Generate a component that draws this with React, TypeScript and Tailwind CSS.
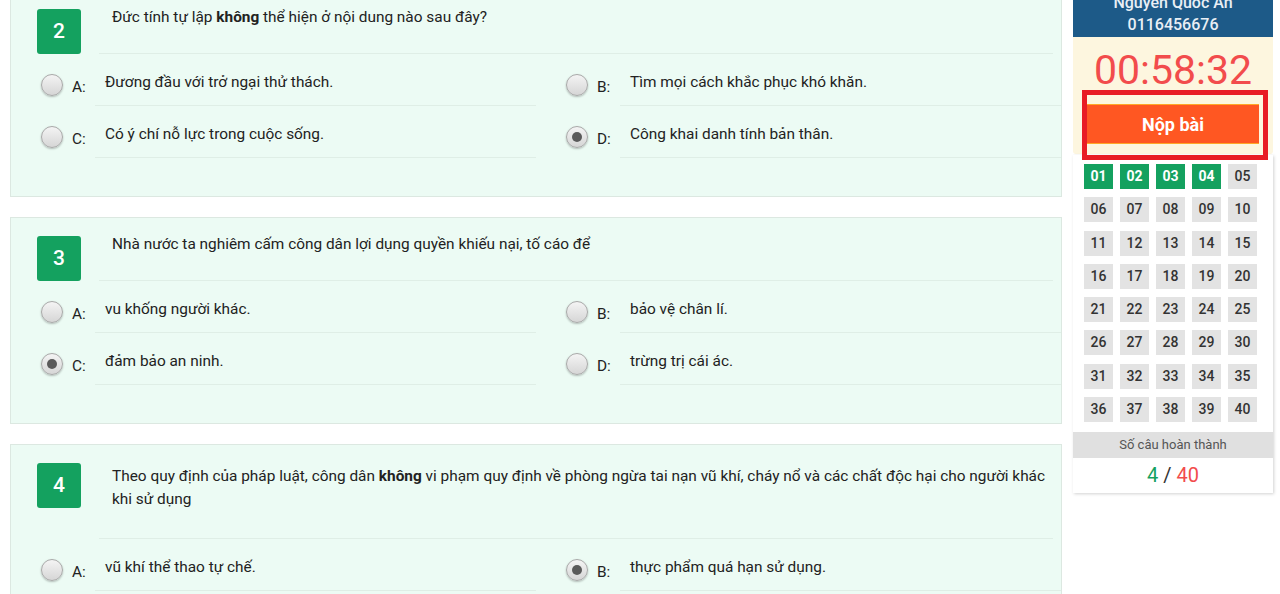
import type { ReactNode } from 'react'

interface Question {
  num: number
  text: ReactNode
  options: string[]
  checked: number
  multiline?: boolean
}

const LETTERS = ['A', 'B', 'C', 'D']

const questions: Question[] = [
  {
    num: 2,
    text: (
      <>
        Đức tính tự lập <b className="font-bold">không</b> thể hiện ở nội dung nào sau đây?
      </>
    ),
    options: [
      'Đương đầu với trở ngại thử thách.',
      'Tìm mọi cách khắc phục khó khăn.',
      'Có ý chí nỗ lực trong cuộc sống.',
      'Công khai danh tính bản thân.',
    ],
    checked: 3,
  },
  {
    num: 3,
    text: 'Nhà nước ta nghiêm cấm công dân lợi dụng quyền khiếu nại, tố cáo để',
    options: ['vu khống người khác.', 'bảo vệ chân lí.', 'đảm bảo an ninh.', 'trừng trị cái ác.'],
    checked: 2,
  },
  {
    num: 4,
    text: (
      <>
        Theo quy định của pháp luật, công dân <b className="font-bold">không</b> vi phạm quy định về
        phòng ngừa tai nạn vũ khí, cháy nổ và các chất độc hại cho người khác khi sử dụng
      </>
    ),
    options: [
      'vũ khí thể thao tự chế.',
      'thực phẩm quá hạn sử dụng.',
      'vũ khí quân dụng được cấp phép.',
      'hóa chất độc hại không rõ nguồn gốc.',
    ],
    checked: 1,
    multiline: true,
  },
]

const answered = [1, 2, 3, 4]

function Radio({ checked }: { checked: boolean }) {
  return (
    <span className="mt-[20px] flex h-[22px] w-[22px] shrink-0 items-center justify-center rounded-full border border-[#a9a9a9] bg-gradient-to-b from-[#f4f4f4] to-[#d6d6d6] shadow-[0_1px_2px_rgba(0,0,0,0.25)]">
      {checked && <span className="h-[10px] w-[10px] rounded-full bg-[#5a5a5a]" />}
    </span>
  )
}

function QuestionCard({ q }: { q: Question }) {
  return (
    <div className="border border-[#dce8e1] bg-[#ecfbf4] pt-[18px] pb-[38px]">
      <div className="flex items-start">
        <div className="ml-[26px] flex h-[45px] w-[44px] shrink-0 items-center justify-center rounded-[3px] bg-[#14a15f] text-[21px] font-medium text-white">
          {q.num}
        </div>
        <div
          className={
            q.multiline
              ? 'mr-[8px] ml-[18px] flex-1 border-b border-[#dfeee6] pt-[2px] pb-[27px] pl-[13px] text-[15.4px] leading-[23px] text-[#222]'
              : 'mr-[8px] ml-[18px] mt-[-3px] flex-1 border-b border-[#dfeee6] pb-[24px] pl-[13px] text-[15.4px] leading-[23px] text-[#222]'
          }
        >
          {q.text}
        </div>
      </div>
      <div className="grid grid-cols-2">
        {q.options.map((opt, i) => (
          <div key={i} className="flex items-start pl-[30px]">
            <Radio checked={i === q.checked} />
            <span className="ml-[9px] mt-[23px] w-[23px] shrink-0 text-[15.4px] leading-[20px] text-[#222]">
              {LETTERS[i]}:
            </span>
            <div className="flex-1 border-b border-[#dfeee6] pt-[17px] pb-[11px] pl-[10px] text-[15.4px] leading-[23px] text-[#222]">
              {opt}
            </div>
          </div>
        ))}
      </div>
    </div>
  )
}

function Sidebar() {
  return (
    <aside className="relative w-[200px] shrink-0">
      <div className="mt-[-14px] bg-[#1d5a88] pt-[6px] pb-[1px] text-center text-[16px] leading-[22px] font-medium text-[#e9eff5]">
        <div>Nguyen Quoc An</div>
        <div>0116456676</div>
      </div>
      <div className="rounded-b-[3px] bg-[#fdf6df] px-[14px] pt-[13px] pb-[10px]">
        <div className="text-center text-[41px] leading-[40px] text-[#f24c4c]">00:58:32</div>
        <button className="mt-[14px] flex h-[40px] w-full items-center justify-center border-y border-[#ffa726] bg-[#ff5722] text-[18px] font-bold text-white">
          Nộp bài
        </button>
      </div>
      <div className="mt-[1px] bg-white shadow-[1px_1px_3px_rgba(0,0,0,0.18)]">
        <div className="grid grid-cols-[repeat(5,29px)] gap-x-[7px] gap-y-[8.3px] pt-[9px] pl-[11px]">
          {Array.from({ length: 40 }, (_, i) => i + 1).map((n) => {
            const done = answered.includes(n)
            return (
              <div
                key={n}
                className={
                  done
                    ? 'flex h-[25px] items-center justify-center bg-[#14a15f] text-[14px] font-bold text-white'
                    : 'flex h-[25px] items-center justify-center bg-[#e3e3e3] text-[14px] font-medium text-[#333]'
                }
              >
                {String(n).padStart(2, '0')}
              </div>
            )
          })}
        </div>
        <div className="mt-[10px] flex h-[26px] items-center justify-center bg-[#e0e0e0] text-[13px] text-[#555]">
          Số câu hoàn thành
        </div>
        <div className="pt-[5px] pb-[6px] text-center text-[20px] leading-[24px]">
          <span className="text-[#14a15f]">4</span>
          <span className="text-[#333]"> / </span>
          <span className="text-[#f24c4c]">40</span>
        </div>
      </div>
      {/* highlight frame over the submit button */}
      <div className="pointer-events-none absolute top-[90px] left-[9px] h-[70px] w-[186px] border-[5px] border-[#e81c24]" />
    </aside>
  )
}

export default function App() {
  return (
    <div className="flex h-[594px] w-full gap-[11px] overflow-hidden bg-white pl-[10px] font-['Roboto',sans-serif]">
      <main className="mt-[-10px] flex w-[1052px] shrink-0 flex-col gap-[20px]">
        {questions.map((q) => (
          <QuestionCard key={q.num} q={q} />
        ))}
      </main>
      <Sidebar />
    </div>
  )
}
